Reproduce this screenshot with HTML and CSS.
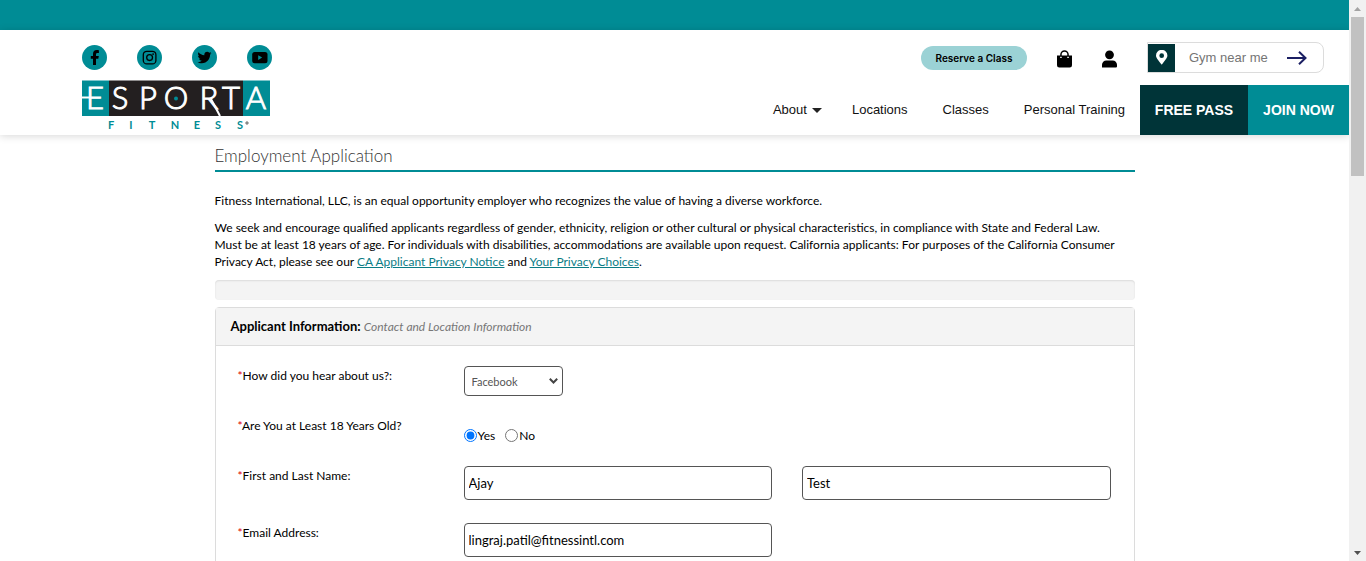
FILE: index.html
```html
<!DOCTYPE html>
<html lang="en">
<head>
<meta charset="utf-8">
<title>Esporta Fitness - Employment Application</title>
<link rel="stylesheet" href="styles.css">
</head>
<body>
<div class="page">
  <div class="topbar"></div>
  <header class="header">
    <div class="brand">
      <div class="social">
        <a href="#" aria-label="Facebook"><svg viewBox="0 0 25 25"><circle cx="12.500" cy="12.500" r="12.500" fill="#008c95"/><path d="M11 20v-6.200H8.800v-2.900H11V9c0-2.500 1.400-3.900 3.700-3.900 1 0 1.900.1 2.200.2v2.600h-1.400c-1.200 0-1.500.6-1.500 1.500v1.500h2.800l-.5 2.900H14V20z"/></svg></a>
        <a href="#" aria-label="Instagram"><svg viewBox="0 0 25 25"><circle cx="12.500" cy="12.500" r="12.500" fill="#008c95"/><rect x="6.300" y="6.300" width="12.600" height="12.600" rx="3.500" fill="none" stroke="#000" stroke-width="1.300"/><circle cx="12.600" cy="12.600" r="2.900" fill="none" stroke="#000" stroke-width="1.300"/><circle cx="16.100" cy="9.100" r=".9"/></svg></a>
        <a href="#" aria-label="Twitter"><svg viewBox="0 0 25 25"><circle cx="12.500" cy="12.500" r="12.500" fill="#008c95"/><path transform="translate(5.500 5.500) scale(.0273)" d="M459 152c.3 4.500.3 9.100.3 13.600 0 138.700-105.600 298.600-298.600 298.600-59.400 0-114.700-17.200-161.200-47.100 8.400 1 16.600 1.300 25.300 1.300 49.100 0 94.200-16.600 130.300-44.800-46.100-1-84.800-31.200-98.100-72.800 6.500 1 13 1.600 19.800 1.600 9.400 0 18.800-1.300 27.600-3.600-48.100-9.700-84.100-52-84.100-103v-1.300c14 7.800 30.200 12.700 47.400 13.300-28.300-18.800-46.800-51-46.800-87.400 0-19.500 5.200-37.400 14.300-53 51.700 63.700 129.300 105.300 216.400 109.800-1.600-7.800-2.600-15.900-2.600-24C249 95.100 295.800 48 354 48c30.200 0 57.500 12.700 76.700 33.100 23.700-4.500 46.500-13.300 66.600-25.300-7.800 24.400-24.400 44.800-46.100 57.800 21.100-2.300 41.600-8.100 60.400-16.200-14.300 20.800-32.200 39.300-52.600 54.600z"/></svg></a>
        <a href="#" aria-label="YouTube"><svg viewBox="0 0 25 25"><circle cx="12.500" cy="12.500" r="12.500" fill="#008c95"/><rect x="5.200" y="7" width="15.300" height="11.200" rx="2.500"/><path d="M11.200 10.200v4.800l4-2.400z" fill="#008c95"/></svg></a>
      </div>
      <a class="logo" href="#" aria-label="Esporta Fitness">
        <svg viewBox="0 0 188 51">
          <path d="M0 .500h27V36H0zM161 .500h27V36h-27z" fill="#008c95"/>
          <path d="M27 .500h134V36H27z" fill="#231f20"/>
          <text class="logo-name" x="13 38 66 94 127 149 174" y="29">ESPORTA</text>
          <path d="M0 17.500h8M129 19l9 17" stroke="#fff" stroke-width="2"/>
          <circle cx="94" cy="18.500" r="2" fill="#008c95"/>
          <text class="logo-sub" x="29 49 70 93 115 136 158" y="49">FITNESS</text>
          <circle cx="165" cy="43" r="1.200" fill="#aaa" stroke="#777"/>
        </svg>
      </a>
    </div>
    <div class="header-side">
      <div class="tools">
        <button class="reserve" type="button">Reserve a Class</button>
        <a class="tool-icon" href="#" aria-label="Shop"><svg width="15" height="18" viewBox="0 0 15 18"><path d="M0 5.500h3.200V4.600a4.300 4.300 0 0 1 8.600 0v.9H15v9.700a2.300 2.300 0 0 1-2.300 2.300H2.300A2.300 2.300 0 0 1 0 15.200zm4.700 0h5.600V4.600a2.800 2.800 0 0 0-5.600 0z"/><path d="M3.200 7.300h1.500M10.300 7.300h1.500" stroke="#fff" stroke-width="1.200"/></svg></a>
        <a class="tool-icon" href="#" aria-label="Account"><svg width="15" height="18" viewBox="0 0 15 18"><circle cx="7.500" cy="4.800" r="4.400"/><path d="M0 17.500v-2.700a4.300 4.300 0 0 1 4.300-4.300h6.400a4.300 4.300 0 0 1 4.300 4.300v1.600q0 1.100-1.100 1.100z"/></svg></a>
        <form class="search">
          <span class="pin"><svg width="12" height="15" viewBox="0 0 12 15"><path fill="#fff" fill-rule="evenodd" d="M5.300 14.300C1.400 9 0 7.700 0 5.500a5.700 5.700 0 0 1 11.400 0c0 2.200-1.400 3.500-5.300 8.800q-.4.500-.8 0zM5.700 8a2.300 2.300 0 1 0 0-4.700 2.300 2.300 0 0 0 0 4.700z"/></svg></span>
          <input type="text" placeholder="Gym near me" aria-label="Gym near me">
          <button type="submit" aria-label="Search"><svg width="20" height="14" viewBox="0 0 20 14"><path d="M0 7h18M12 .800 18.500 7 12 13.200" fill="none" stroke="#1b1f63" stroke-width="2"/></svg></button>
        </form>
      </div>
      <nav class="nav">
        <a href="#">About <svg width="10" height="5" viewBox="0 0 10 5"><path d="M0 0h10L5 5z" fill="#222"/></svg></a>
        <a href="#">Locations</a>
        <a href="#">Classes</a>
        <a href="#">Personal Training</a>
        <a class="cta dark" href="#">FREE PASS</a>
        <a class="cta" href="#">JOIN NOW</a>
      </nav>
    </div>
  </header>
  <main class="main">
    <h1>Employment Application</h1>
    <p>Fitness International, LLC, is an equal opportunity employer who recognizes the value of having a diverse workforce.</p>
    <p>We seek and encourage qualified applicants regardless of gender, ethnicity, religion or other cultural or physical characteristics, in compliance with State and Federal Law.<br>Must be at least 18 years of age. For individuals with disabilities, accommodations are available upon request. California applicants: For purposes of the California Consumer<br>Privacy Act, please see our <a href="#">CA Applicant Privacy Notice</a> and <a href="#">Your Privacy Choices</a>.</p>
    <div class="progress"></div>
    <form class="panel">
      <h2>Applicant Information: <em>Contact and Location Information</em></h2>
      <div class="fields">
        <label for="hear"><i>*</i>How did you hear about us?:</label>
        <div class="select"><select id="hear"><option>Facebook</option></select><svg width="9" height="6" viewBox="0 0 9 6"><path d="M.800.800 4.500 4.500 8.200.800" fill="none" stroke="#444" stroke-width="2"/></svg></div>
        <span class="label" id="age"><i>*</i>Are You at Least 18 Years Old?</span>
        <div class="radios" role="radiogroup" aria-labelledby="age">
          <label><input type="radio" name="age" checked>Yes</label>
          <label><input type="radio" name="age">No</label>
        </div>
        <label for="first"><i>*</i>First and Last Name:</label>
        <input class="text" id="first" type="text" value="Ajay">
        <input class="text" type="text" value="Test" aria-label="Last name">
        <label for="email"><i>*</i>Email Address:</label>
        <input class="text" id="email" type="email" value="lingraj.patil@fitnessintl.com">
      </div>
    </form>
  </main>
</div>
<div class="scrollbar" aria-hidden="true">
  <svg width="7" height="4" viewBox="0 0 7 4"><path d="M0 4h7L3.500 0z" fill="#a3a3a3"/></svg>
  <div class="thumb"></div>
  <svg width="7" height="4" viewBox="0 0 7 4"><path d="M0 0h7L3.500 4z" fill="#505050"/></svg>
</div>
</body>
</html>
```
FILE: styles.css
```css
* { box-sizing: border-box; }

body {
  margin: 0;
  display: flex;
  height: 100vh;
  overflow: hidden;
  background: #fff;
  color: #000;
  font: 12px/17px Lato, Carlito, sans-serif;
}

a { color: inherit; text-decoration: none; }
svg { display: block; }

.page { flex: 1; min-width: 0; overflow: hidden; }
.topbar { height: 30px; background: #008c95; }

.header {
  display: flex;
  justify-content: space-between;
  height: 105px;
  padding-left: 82px;
  box-shadow: 0 1px 8px rgba(0, 0, 0, .16);
  font-family: "Liberation Sans", Arial, sans-serif;
}

.brand { padding-top: 15px; width: 190px; }
.social { display: flex; justify-content: space-between; margin-bottom: 10px; }
.social svg { width: 25px; height: 25px; }
.logo svg { width: 188px; height: 51px; overflow: visible; }
.logo-name { font: 300 31px Lato, sans-serif; fill: #fff; stroke: #fff; stroke-width: 1px; text-anchor: middle; }
.logo-sub { font: 700 11px Lato, sans-serif; fill: #008c95; text-anchor: middle; }

.header-side { display: flex; flex-direction: column; justify-content: space-between; }
.tools { display: flex; justify-content: flex-end; align-items: center; gap: 30px; padding: 12px 25px 0 0; }
.reserve {
  width: 106px;
  height: 24px;
  padding: 0;
  border: 0;
  border-radius: 12px;
  background: #9bd2d5;
  color: #000;
  font: 600 10px Inter, sans-serif;
}
.tool-icon { padding-top: 3px; }
.search {
  display: flex;
  align-items: center;
  width: 177px;
  height: 31px;
  border: 1px solid #dcdcdc;
  border-radius: 0 8px 8px 0;
}
.pin { display: grid; place-items: center; width: 27px; height: 28px; background: #003438; }
.search input {
  width: 112px;
  padding: 0 0 0 14px;
  border: 0;
  background: none;
  font: 13px "Liberation Sans", Arial, sans-serif;
}
.search input::placeholder { color: #757575; }
.search button { padding: 0; border: 0; background: none; }

.nav { display: flex; align-items: center; gap: 30px; font-size: 13px; line-height: 50px; color: #111; }
.nav a { display: flex; align-items: center; gap: 5px; }
.nav a:nth-child(3), .nav a:nth-child(4) { margin-left: 5px; }
.nav .cta { justify-content: center; width: 101px; margin-left: -30px; background: #008c95; color: #fff; font-size: 14px; font-weight: 700; }
.nav .cta.dark { width: 108px; margin-left: -15px; background: #003438; }

.main { width: 920px; max-width: 100%; margin: 0 auto; padding-top: 8px; }
h1 {
  margin: 0 0 20px;
  padding-bottom: 1px;
  border-bottom: 2px solid #008c95;
  color: #333;
  font-size: 17px;
  font-weight: 300;
  line-height: 26px;
}
p { margin: 0 0 10px; white-space: nowrap; }
p a { color: #0b7c85; text-decoration: underline; }

.progress { height: 20px; margin-bottom: 7px; border-radius: 4px; background: #f4f4f4; box-shadow: inset 0 1px 2px rgba(0, 0, 0, .1); }
.panel { border: 1px solid #dcdcdc; border-radius: 4px 4px 0 0; }
h2 { margin: 0; padding: 10px 15px; border-bottom: 1px solid #dcdcdc; background: #f4f4f4; font-size: 13px; line-height: 17px; }
h2 em { color: #777; font-size: 12px; font-weight: 400; }

.fields {
  display: grid;
  grid-template-columns: 196px 1fr 1fr;
  grid-template-rows: 30px 30px 37px 37px;
  align-items: start;
  gap: 20px 30px;
  padding: 20px 23px 40px 22px;
}
.fields > label, .label { grid-column: 1; padding-top: 1px; }
.fields i { color: #d00; font-style: normal; }
.select { display: grid; grid-template-columns: 99px; align-items: center; grid-column: 2 / 4; }
.select select, .select svg { grid-area: 1 / 1; }
.select svg { justify-self: end; margin-right: 5px; pointer-events: none; }
.select select {
  height: 30px;
  padding: 0 7px;
  appearance: none;
  border: 1px solid #555;
  border-radius: 4px;
  background: #fff;
  color: #555;
  font: 11px Lato, sans-serif;
}
.radios { display: flex; gap: 10px; grid-column: 2 / 4; padding-top: 11px; }
.radios label { display: flex; align-items: center; gap: 1px; height: 17px; }
.radios input { width: 13px; height: 13px; margin: 0; }
.text {
  min-width: 0;
  height: 34px;
  padding: 0 4px;
  border: 1px solid #555;
  border-radius: 4px;
  color: #000;
  font: 13px Lato, sans-serif;
}

.scrollbar { display: flex; flex-direction: column; align-items: center; width: 17px; padding: 7px 0 6px; background: #f1f1f1; }
.thumb { width: 13px; height: 159px; margin: 6px 0 auto; background: #c1c1c1; }
```
